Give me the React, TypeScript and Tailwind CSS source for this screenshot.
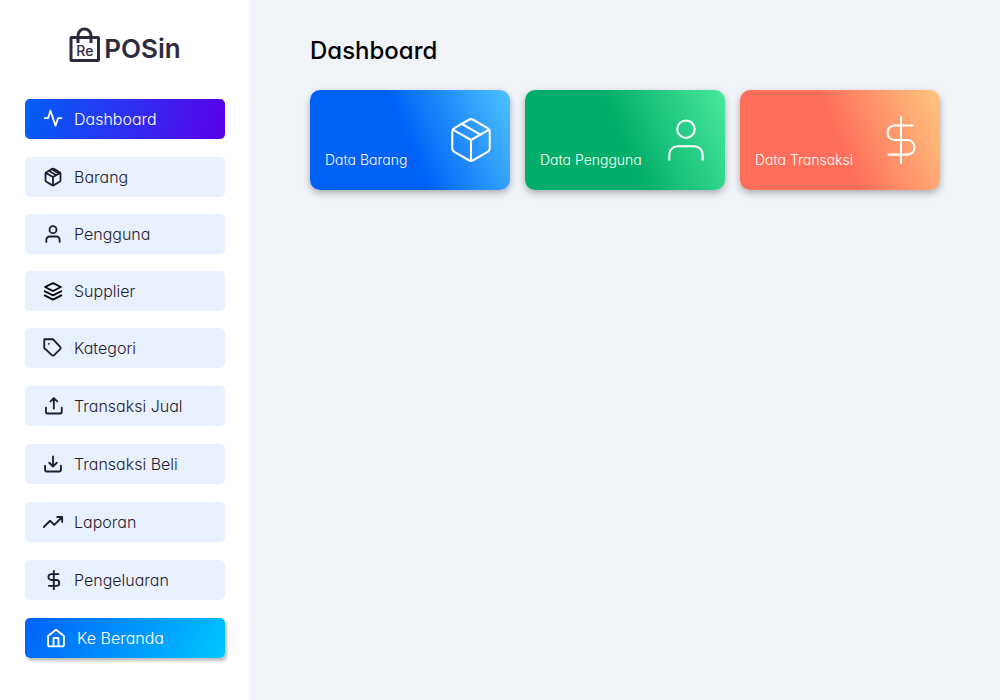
import { ReactNode } from 'react';

type IconProps = { className: string; weight?: number; children: ReactNode };

function Icon({ className, weight = 2.2, children }: IconProps) {
  return (
    <svg
      viewBox="0 0 24 24"
      fill="none"
      stroke="currentColor"
      strokeWidth={weight}
      strokeLinecap="round"
      strokeLinejoin="round"
      aria-hidden="true"
      className={`shrink-0 overflow-visible ${className}`}
    >
      {children}
    </svg>
  );
}

const boxShape = (
  <>
    <path d="M21 16V8a2 2 0 0 0-1-1.73l-7-4a2 2 0 0 0-2 0l-7 4A2 2 0 0 0 3 8v8a2 2 0 0 0 1 1.73l7 4a2 2 0 0 0 2 0l7-4A2 2 0 0 0 21 16z" />
    <path d="M3.3 7 12 12l8.7-5M12 22V12" />
  </>
);

const userShape = (
  <>
    <circle cx="12" cy="6.8" r="4.2" />
    <path d="M4 21.500v-2.500a4 4 0 0 1 4-4h8a4 4 0 0 1 4 4v2.500" />
  </>
);

const dollarShape = (
  <path d="M12 1v22M17.500 5H9a3.500 3.500 0 0 0 0 7h6a3.500 3.500 0 0 1 0 7H6" />
);

type Item = { label: string; icon: ReactNode };

const masterItems: Item[] = [
  {
    label: 'Barang',
    icon: (
      <>
        {boxShape}
        <path strokeWidth="2" d="M7.300 4.700l8.200 4.800M11 3l8 4.800" />
      </>
    ),
  },
  { label: 'Pengguna', icon: userShape },
  {
    label: 'Supplier',
    icon: (
      <path
        stroke="#000"
        d="M12 2.500 2.500 7.200l9.500 4.800 9.500-4.800zM2 12.300l10 5 10-5M2 17.300l10 5 10-5"
      />
    ),
  },
  {
    label: 'Kategori',
    icon: (
      <path d="M20.59 13.41l-7.17 7.17a2 2 0 0 1-2.83 0L1.500 12V1.500H12l8.590 9.090a2 2 0 0 1 0 2.820zM7 7h.01" />
    ),
  },
];

const reportItems: Item[] = [
  {
    label: 'Transaksi Jual',
    icon: <path d="M3.500 14v5a2 2 0 0 0 2 2h15a2 2 0 0 0 2-2v-5M17 6.500l-4-4-4 4M13 3v12" />,
  },
  {
    label: 'Transaksi Beli',
    icon: <path d="M2.500 14v5a2 2 0 0 0 2 2h15a2 2 0 0 0 2-2v-5M7.500 10.500l4.500 4.500 4.500-4.500M12 14.500V3" />,
  },
  { label: 'Laporan', icon: <path d="M23 6l-9.500 9.500-5-5L1 18M17 6h6v6" /> },
  { label: 'Pengeluaran', icon: <g transform="translate(1 0)">{dollarShape}</g> },
];

const cards: { label: string; fill: string; icon: ReactNode }[] = [
  {
    label: 'Data Barang',
    fill: 'bg-[linear-gradient(67deg,#0061f7_49%,#4fc3ff_100%)]',
    icon: (
      <>
        {boxShape}
        <path d="M7.500 4.210l9 5.190" />
      </>
    ),
  },
  {
    label: 'Data Pengguna',
    fill: 'bg-[linear-gradient(67deg,#02ae69_49%,#4ae99e_100%)]',
    icon: userShape,
  },
  {
    label: 'Data Transaksi',
    fill: 'bg-[linear-gradient(67deg,#ff6e5a_49%,#ffc67f_100%)]',
    icon: dollarShape,
  },
];

function Logo() {
  return (
    <a href="#" aria-label="RePOSin" className="flex items-end justify-center gap-1 text-[#2e2b41]">
      <span className="relative flex h-9 w-[31px] items-end justify-center pb-[5px]">
        <svg viewBox="0 0 31 36" fill="none" stroke="currentColor" strokeWidth="3" className="absolute inset-0" aria-hidden="true">
          <rect x="2" y="10.5" width="27.500" height="23" rx="0.500" />
          <path d="M9 16V8.500a6.500 6.500 0 0 1 13 0V16" />
        </svg>
        <span className="text-sm leading-none font-medium">Re</span>
      </span>
      <span className="text-[26px] leading-7 font-semibold">POSin</span>
    </a>
  );
}

function NavItem({ label, icon }: Item) {
  return (
    <a href="#" className="flex h-10 items-center gap-[11px] rounded-[5px] bg-[#e9f1ff] pl-[18px]">
      <Icon className="size-5">{icon}</Icon>
      {label}
    </a>
  );
}

export default function App() {
  return (
    <div className="flex min-h-screen bg-[#f0f4f9] font-['Inter',sans-serif] [font-feature-settings:'cv11']">
      <aside className="w-[250px] shrink-0 bg-white px-[25px] pt-[27px] pb-10">
        <Logo />
        <nav className="mt-9 flex flex-col gap-[18px] text-base font-[350] text-[#1f1d30]">
          <a
            href="#"
            aria-current="page"
            className="flex h-10 items-center gap-[11px] rounded-[5px] bg-[linear-gradient(105deg,#0061f7,#5a00e8)] pl-[18px] text-white"
          >
            <Icon className="size-5"><path d="M22 11h-4l-3 9L9 2l-3 9H2" /></Icon>
            Dashboard
          </a>
          <div className="flex flex-col gap-[17px]">
            {masterItems.map((item) => (
              <NavItem key={item.label} {...item} />
            ))}
          </div>
          {reportItems.map((item) => (
            <NavItem key={item.label} {...item} />
          ))}
          <a
            href="#"
            className="flex h-10 items-center gap-[11px] rounded-[5px] bg-[linear-gradient(120deg,#0061f7,#00c6ff)] pl-[21px] text-white shadow-[2px_3px_3px_rgba(0,0,0,0.25)]"
          >
            <Icon className="size-5">
              <path d="M2.500 9.500 12 2l9.500 7.500V20a2 2 0 0 1-2 2h-15a2 2 0 0 1-2-2zM9 22V12h6v10" />
            </Icon>
            Ke Beranda
          </a>
        </nav>
      </aside>
      <main className="flex-1 px-[60px] pt-[33px]">
        <h1 className="text-2xl leading-9 font-medium text-black">Dashboard</h1>
        <div className="mt-[21px] flex flex-wrap gap-[15px]">
          {cards.map((card) => (
            <a
              key={card.label}
              href="#"
              className={`flex h-[100px] w-[200px] justify-between rounded-[10px] pr-[14px] pl-[15px] text-white shadow-[0_3px_7px_rgba(0,0,0,0.3)] ${card.fill}`}
            >
              <span className="self-end pb-5 text-sm font-light">{card.label}</span>
              <Icon className="size-[50px] self-center" weight={1}>{card.icon}</Icon>
            </a>
          ))}
        </div>
      </main>
    </div>
  );
}
